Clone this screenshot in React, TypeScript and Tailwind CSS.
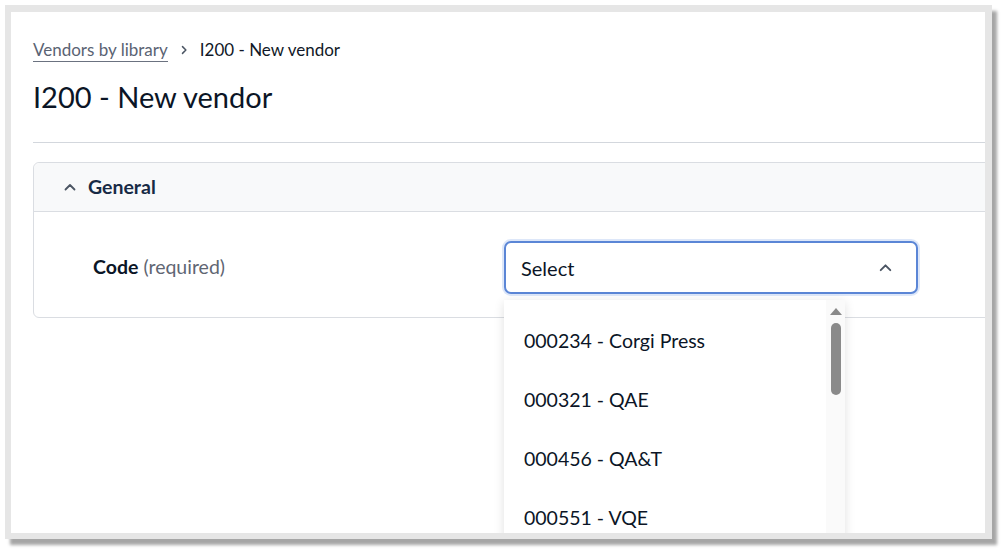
import React from "react";

const items = ["000234 - Corgi Press", "000321 - QAE", "000456 - QA&T", "000551 - VQE"];

function ChevronUp({ className }: { className?: string }) {
  return (
    <svg viewBox="0 0 16 16" className={className} fill="none" stroke="currentColor" strokeWidth="1.8" strokeLinecap="round" strokeLinejoin="round">
      <path d="M3.5 10.5 8 6l4.5 4.5" />
    </svg>
  );
}

export default function App() {
  return (
    <div className="w-[1005px] h-[553px] bg-white overflow-hidden pl-[5px] pt-[5px]" style={{ fontFamily: "Lato, 'Noto Sans', sans-serif" }}>
      <div className="w-[987px] h-[534px] bg-[#e6e6e6] pl-[6px] pr-[7px] pt-[7px] pb-[6px] shadow-[5px_6px_3px_rgba(0,0,0,0.35)]">
        <div className="w-full h-full bg-white overflow-hidden pl-[22px] pt-[26px]">
          <nav className="flex items-center h-[24px] text-[17px] leading-[24px]">
            <span className="text-[#5a6373] border-b border-[#6b7280] leading-[22px]">Vendors by library</span>
            <svg viewBox="0 0 16 16" className="w-[12px] h-[12px] mx-[10px] text-[#4b5563]" fill="none" stroke="currentColor" strokeWidth="2" strokeLinecap="round" strokeLinejoin="round">
              <path d="M6 3.5 10.5 8 6 12.5" />
            </svg>
            <span className="text-[#111827]">I200 - New vendor</span>
          </nav>
          <h1 className="mt-[17px] text-[29px] leading-[36px] text-[#0b1526] font-normal">I200 - New vendor</h1>
          <div className="mt-[27px] h-px bg-[#d3d7dd]" />
          <div className="mt-[19px] w-[990px] h-[156px] border border-[#dadde2] rounded-[6px] relative">
            <div className="h-[49px] bg-[#f8f9fa] border-b border-[#dadde2] rounded-t-[6px] flex items-center pl-[28px]">
              <ChevronUp className="w-[16px] h-[16px] text-[#4b5563]" />
              <span className="ml-[10px] text-[19.5px] font-bold text-[#172a45]">General</span>
            </div>
            <div className="flex items-start">
              <div className="w-[470px] pl-[59px] pt-[43px] text-[19.5px] leading-[24px]">
                <span className="font-bold text-[#0b1526]">Code</span>
                <span className="text-[#5f6673]"> (required)</span>
              </div>
              <div className="pt-[29px] relative">
                <div className="w-[414px] h-[53px] border-2 border-[#5b86d6] rounded-[7px] shadow-[0_0_0_2px_rgba(120,160,230,0.25)] flex items-center justify-between pl-[15px] pr-[22px] bg-white">
                  <span className="text-[20px] text-[#0b1526]">Select</span>
                  <ChevronUp className="w-[17px] h-[17px] text-[#4b5563]" />
                </div>
                <div className="absolute left-0 top-[88px] w-[341px] h-[260px] bg-white shadow-[0_2px_10px_rgba(0,0,0,0.12)] flex z-10">
                  <ul className="flex-1 pt-[11px]">
                    {items.map((t) => (
                      <li key={t} className="h-[59px] flex items-center pl-[20px] text-[19.5px] text-[#0b1526]">
                        {t}
                      </li>
                    ))}
                  </ul>
                  <div className="w-[19px] bg-[#fafafa] flex flex-col items-center pt-[8px]">
                    <div className="w-0 h-0 border-l-[6px] border-r-[6px] border-b-[7px] border-l-transparent border-r-transparent border-b-[#8a8a8a]" />
                    <div className="mt-[8px] w-[10px] h-[72px] rounded-full bg-[#8a8a8a]" />
                  </div>
                </div>
              </div>
            </div>
          </div>
        </div>
      </div>
    </div>
  );
}
